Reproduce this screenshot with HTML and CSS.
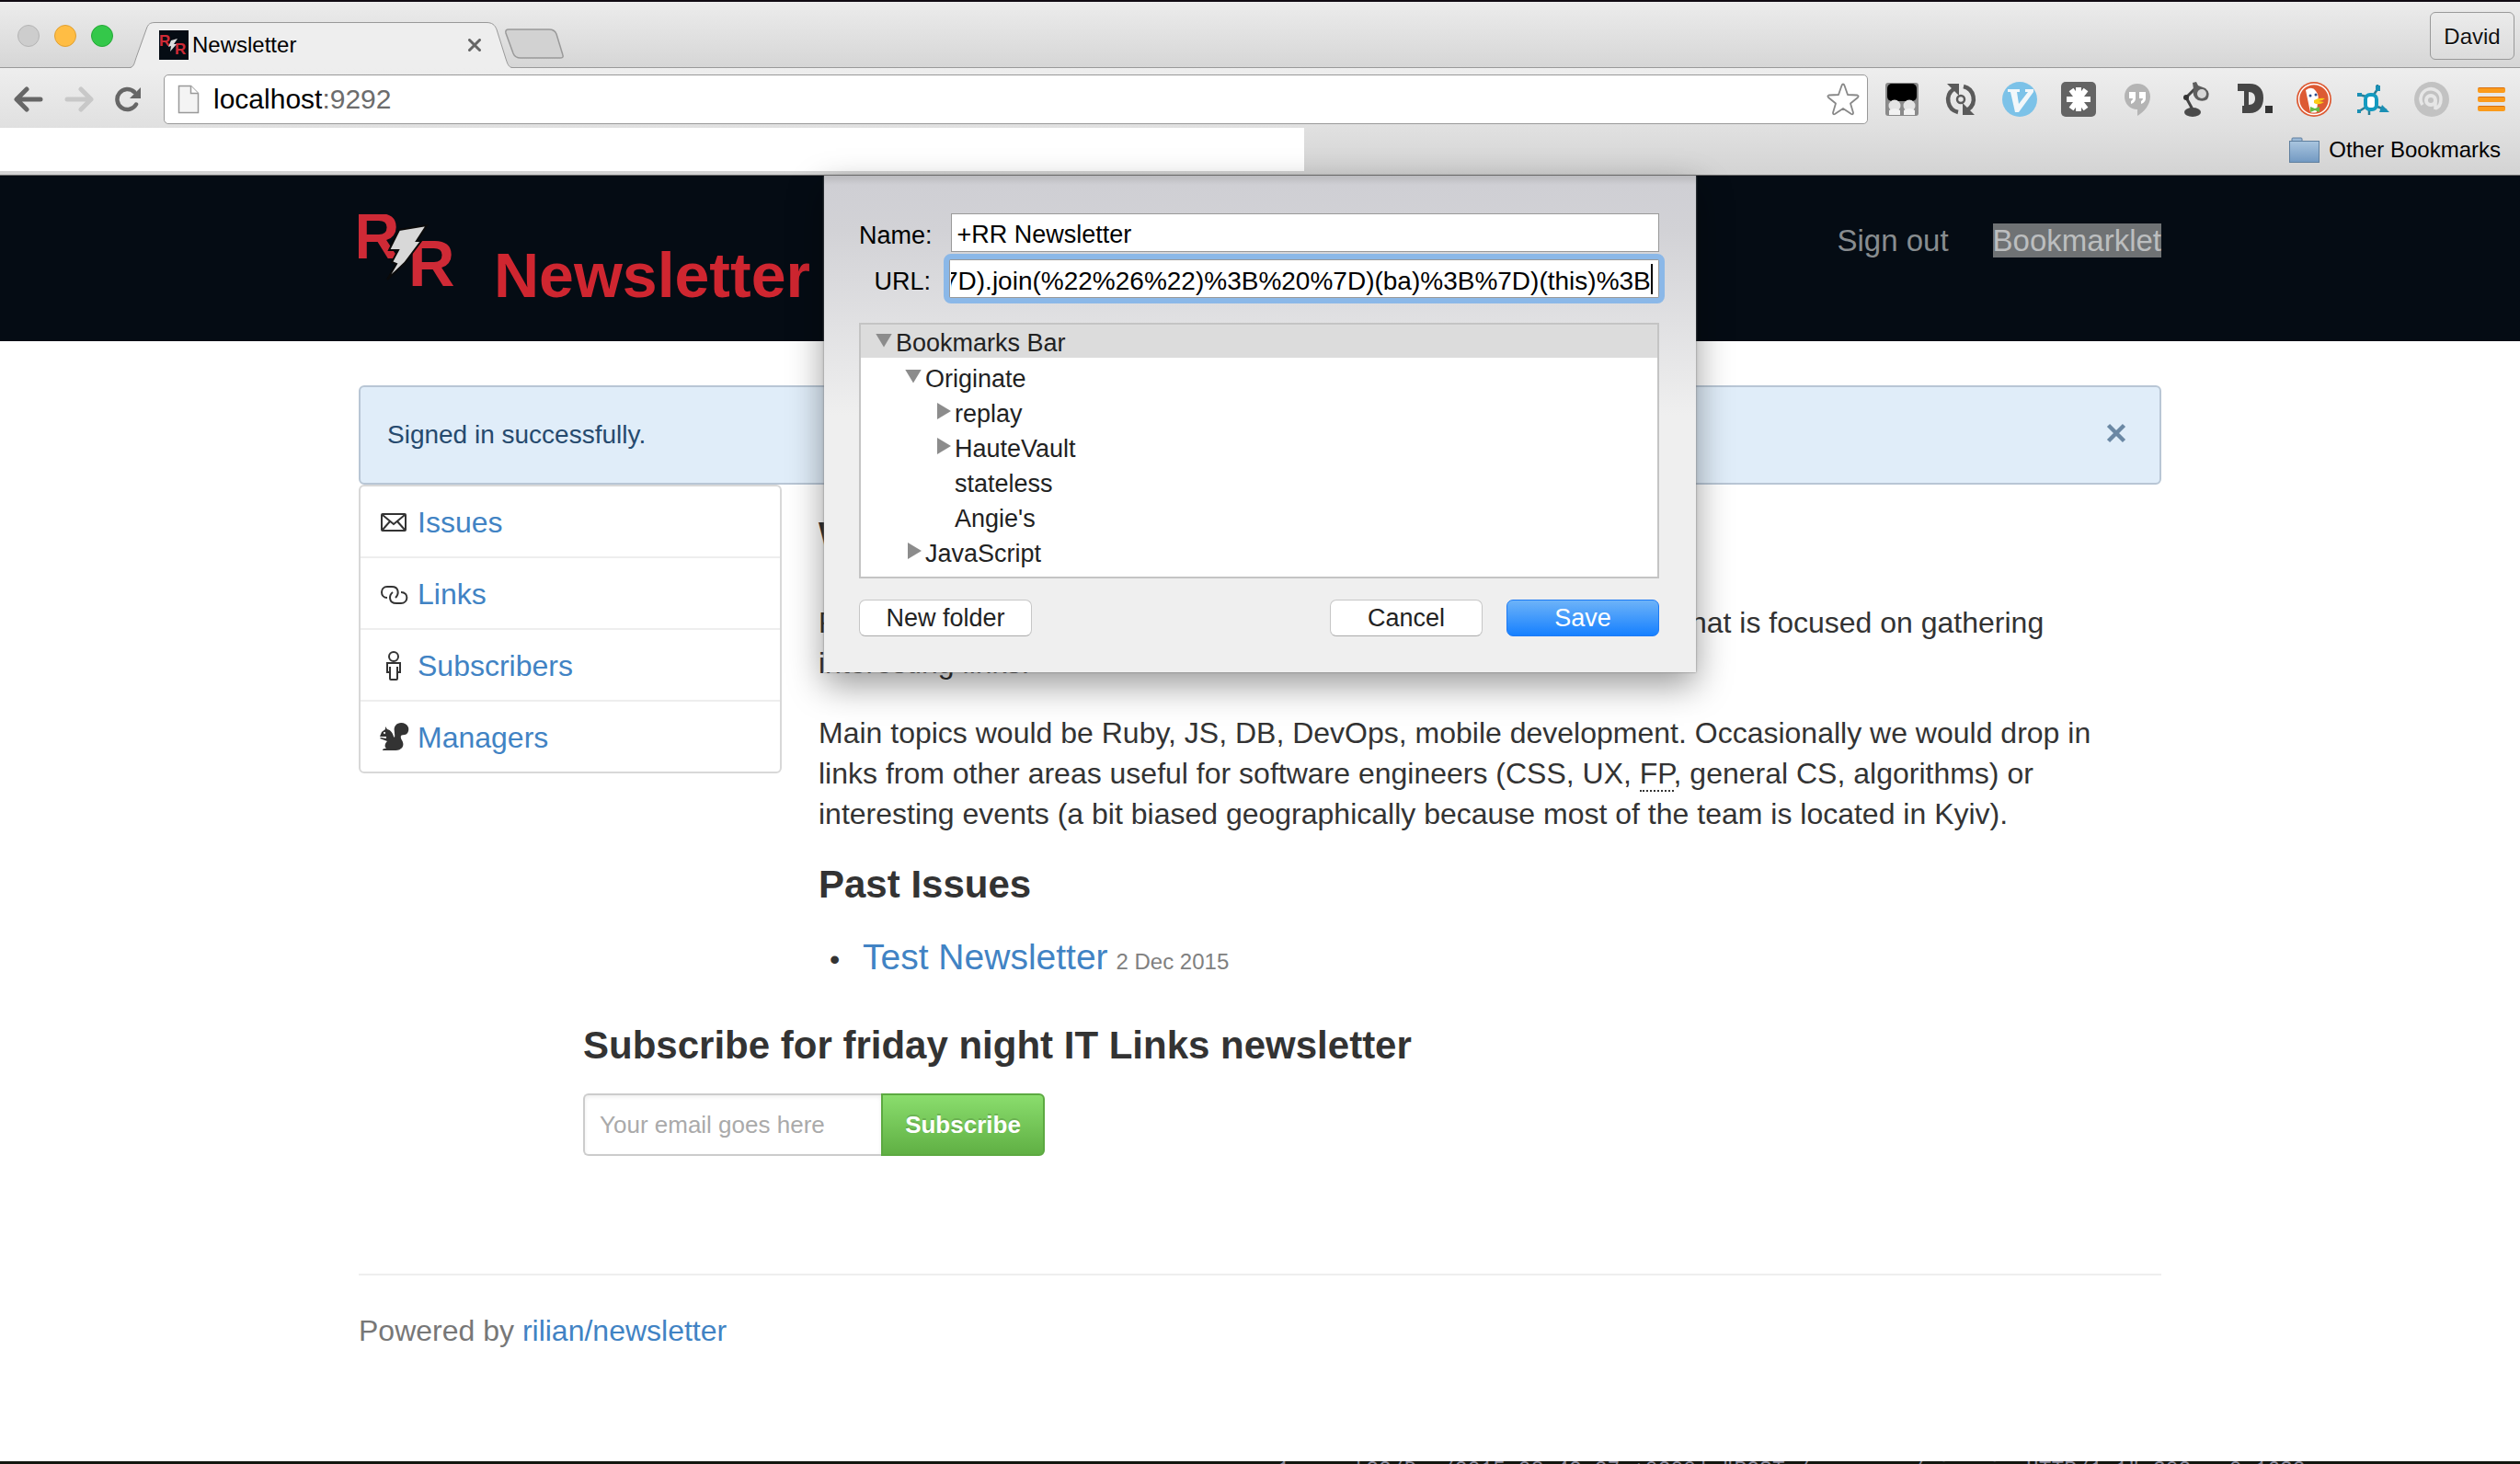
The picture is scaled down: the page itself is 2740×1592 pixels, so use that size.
FILE: index.html
```html
<!DOCTYPE html>
<html lang="en">
<head>
<meta charset="utf-8">
<title>Newsletter</title>
<link rel="stylesheet" href="styles.css">
</head>
<body>
<div class="titlebar">
  <div class="lights"><span class="light"></span><span class="light light-min"></span><span class="light light-max"></span></div>
  <div class="tab">
    <svg class="tab-shape" viewBox="0 0 416 50" preserveAspectRatio="none" aria-hidden="true"><path d="M0 50C5 49 5 44 8 36L18 8C20 2 22 1 28 1H388C394 1 397 3 399 8L409 40C411 46 412 49 416 50Z" fill="#eeeeee"/><path d="M0 49.500C5 49 5 44 8 36L18 8C20 2 22 .5 28 .5H388C394 .5 397 3 399 8L409 40C411 46 412 49 416 49.500" fill="none" stroke="#999"/></svg>
    <svg class="favicon" viewBox="0 0 32 32" aria-hidden="true"><rect width="32" height="32" fill="#050c14"/><text class="rr" x="0" y="17" font-size="17">R</text><text class="rr" x="17" y="26" font-size="17">R</text><path d="M13 11l7-2-4 6h3l-7 8 1-6-3 1z" fill="#ddd"/></svg>
    <span class="tab-title">Newsletter</span>
    <button class="tab-close" aria-label="Close tab"><svg width="14" height="14" viewBox="0 0 14 14"><path d="M1.500 1.500l11 11M12.500 1.500l-11 11" stroke="#666" stroke-width="3" stroke-linecap="round"/></svg></button>
  </div>
  <button class="new-tab" aria-label="New tab"><svg width="66" height="34" viewBox="0 0 66 34"><path d="M5 1H49Q55 1 57 6L64 29Q65 32 61 32H18Q12 32 10 27L2 5Q1 1 5 1Z" fill="#d2d2d2" stroke="#999" stroke-width="1.500"/></svg></button>
  <button class="profile">David</button>
</div>
<div class="toolbar">
  <button class="tool" aria-label="Back"><svg width="32" height="28" viewBox="0 0 32 28"><path d="M14 3L3 14l11 11M4 14h25" fill="none" stroke="#666" stroke-width="5" stroke-linecap="round" stroke-linejoin="round"/></svg></button>
  <button class="tool" aria-label="Forward"><svg width="32" height="28" viewBox="0 0 32 28"><path d="M18 3l11 11-11 11M28 14H3" fill="none" stroke="#c8c8c8" stroke-width="5" stroke-linecap="round" stroke-linejoin="round"/></svg></button>
  <button class="tool" aria-label="Reload"><svg width="30" height="28" viewBox="0 0 30 28"><path d="M23 19.500A11 11 0 1 1 21 6" fill="none" stroke="#666" stroke-width="4.500" stroke-linecap="round"/><path d="M28 1v12H16z" fill="#666"/></svg></button>
  <div class="omnibox">
    <svg width="24" height="32" viewBox="0 0 24 32" aria-hidden="true"><path d="M1.500 1.500h13l8 8v21h-21z" fill="#f4f4f4" stroke="#999" stroke-width="1.500"/><path d="M14.500 1.500v8h8" fill="#fff" stroke="#999" stroke-width="1.500"/></svg>
    <span class="address">localhost<span class="port">:9292</span></span>
    <svg class="star" width="36" height="36" viewBox="0 0 36 36" aria-hidden="true"><path d="M18 1.500Q19 1.500 19.500 3L23 13l10.500.5q2 .8.5 2.500L26 22.500l3 10q0 2.500-2 1.500l-9-6-9 6q-2 1-2-1.500l3-10L2 16q-1.500-1.700.5-2.500L13 13l3.500-10q.5-1.500 1.500-1.500z" fill="#fff" stroke="#888" stroke-width="1.800" stroke-linejoin="round"/></svg>
  </div>
  <div class="extensions" aria-hidden="true">
    <svg width="38" height="38" viewBox="0 0 38 38"><rect x="1" y="1" width="36" height="36" rx="3" fill="#8a8a8a"/><rect x="3" y="2" width="32" height="19" rx="5" fill="#000"/><circle cx="11" cy="26" r="6.500" fill="#e4e4e4"/><circle cx="27" cy="26" r="6.500" fill="#e4e4e4"/><path d="M5 31q6-4 12 0v5H5zM21 31q6-4 12 0v5H21z" fill="#f2f2f2"/></svg>
    <svg width="38" height="38" viewBox="0 0 38 38"><path d="M11 8A14 14 0 0 0 16 33M27 30A14 14 0 0 0 22 5" fill="none" stroke="#5a5a5a" stroke-width="4.500"/><path d="M4 2h13v13zM34 36H21V23z" fill="#5a5a5a"/><circle cx="19" cy="19" r="4" fill="none" stroke="#5a5a5a" stroke-width="2.500"/></svg>
    <svg width="38" height="38" viewBox="0 0 38 38"><circle cx="19" cy="19" r="19" fill="#7cc2e8"/><path d="M6 8h13v3h-3l2 13 10-13h-3V8h9v3L18 33h-4L9 11H6z" fill="#f2f7fa"/></svg>
    <svg width="38" height="38" viewBox="0 0 38 38"><rect width="38" height="38" rx="5" fill="#646464"/><path d="M19 6v26M6 19h26M11 8.500l16 21M27 8.500L11 29.500" stroke="#fff" stroke-width="6"/></svg>
    <svg width="38" height="38" viewBox="0 0 38 38"><path d="M19 2c8 0 14 6 14 14 0 9-7 17-14 21v-7C11 30 5 24 5 16S11 2 19 2z" fill="#b4b4b4"/><path d="M10 11h7v7q0 4-5 6v-3q2-1 2-3h-4zM21 11h7v7q0 4-5 6v-3q2-1 2-3h-4z" fill="#fff"/></svg>
    <svg width="38" height="38" viewBox="0 0 38 38"><path d="M15 30L8 17 17 8" fill="none" stroke="#444" stroke-width="3"/><ellipse cx="15" cy="33" rx="9" ry="5" fill="#4a4a4a"/><path d="M15 1l4-1 2 4 8 3q6 5 2 12-4 3-10 1-7-4-5-12z" fill="#5e5e5e"/><ellipse cx="25" cy="13" rx="5" ry="5" fill="#d8d8d8"/><circle cx="8" cy="17" r="3" fill="#333"/></svg>
    <svg width="38" height="38" viewBox="0 0 38 38"><path fill-rule="evenodd" d="M0 2h13c10 0 15 6 15 15.500S23 34 13 34H5v-8H7V10H0zM12 11v14c5 0 7-3 7-7s-2-7-7-7z" fill="#464646"/><rect x="30" y="26" width="8" height="8" fill="#333"/></svg>
    <svg width="38" height="38" viewBox="0 0 38 38"><circle cx="19" cy="19" r="19" fill="#dd5a33"/><circle cx="19" cy="19" r="16.500" fill="none" stroke="#fff" stroke-width="1.500"/><path d="M10 9q7-5 11 1 4 5 2 12l-1 11q-4 1-7 0z" fill="#fff"/><path d="M19 20q5-3 12-2-3 3-7 3l6 1q-6 4-11 1z" fill="#fbcc18"/><circle cx="15" cy="15" r="1.500" fill="#2d4f8e"/><circle cx="21" cy="14" r="1.500" fill="#2d4f8e"/><path d="M15 27l5 2 5-2v6l-5-2-5 2z" fill="#66bb46"/></svg>
    <svg width="38" height="38" viewBox="0 0 38 38"><path d="M12 16L4 14M12 27l-8 5M15 29v7M20 14l4-6V3M24 27l10 4" stroke="#2b7d94" stroke-width="2.500" fill="none"/><rect x="11" y="14" width="12" height="16" rx="5" fill="#fff" stroke="#149ac0" stroke-width="4"/><path d="M22 4h5v6h-5zM2 12h5v4H2zM2 30h4v4H2zM29 25l8 8H26z" fill="#1a8fb4"/></svg>
    <svg width="38" height="38" viewBox="0 0 38 38"><circle cx="19" cy="19" r="19" fill="#c2c2c2"/><circle cx="18" cy="20" r="5" fill="none" stroke="#e6e6e6" stroke-width="4"/><path d="M23 30V20M9 25a11 11 0 1 1 20-6q0 8-6 10" fill="none" stroke="#e6e6e6" stroke-width="3.500"/></svg>
  </div>
  <button class="menu" aria-label="Menu"><span></span><span></span><span></span></button>
</div>
<div class="bookmarks">
  <div class="bookmarks-blank"></div>
  <a class="folder" href="#"><svg width="33" height="28" viewBox="0 0 33 28" aria-hidden="true"><defs><linearGradient id="fold" x2="0" y2="1"><stop stop-color="#a9c5df"/><stop offset="1" stop-color="#7299c2"/></linearGradient></defs><path d="M3 5V2q0-1 1-1h9q1 0 1 1v3" fill="#9bb9d6" stroke="#5f7f9f"/><rect x=".5" y="4.500" width="32" height="23" fill="url(#fold)" stroke="#5f7f9f"/></svg>Other Bookmarks</a>
</div>

<div class="viewport">
  <header class="site-header">
    <div class="container header-row">
      <a class="logo" href="#" aria-label="RR"><svg width="107" height="82" viewBox="0 0 107 82"><text class="rr" x="-6" y="48" font-size="70">R</text><text class="rr" x="54" y="78" font-size="70">R</text><path d="M44 17L74 12 63 29H68L50 53 31 71 41 54 36 52 43 39H33Z" fill="#d8d8d8" stroke="#0a0a0a" stroke-width="2"/></svg></a>
      <a class="brand" href="#">Newsletter</a>
      <nav class="account"><a href="#">Sign out</a><a href="#"><span class="selected">Bookmarklet</span></a></nav>
    </div>
  </header>
  <main class="container">
    <div class="alert"><span>Signed in successfully.</span><button class="alert-close" aria-label="Dismiss"><svg width="22" height="22" viewBox="0 0 22 22"><path d="M2.500 2.500l17 17M19.500 2.500l-17 17" stroke="#6b88a4" stroke-width="4.500"/></svg></button></div>
    <div class="columns">
      <nav class="side">
        <ul>
          <li><svg width="32" height="34" viewBox="0 0 32 34" aria-hidden="true"><g fill="none" stroke="#333" stroke-width="2"><rect x="2" y="8" width="26" height="18" rx="1"/><path d="M3 9l12 10L27 9M3 25l8-9M27 25l-8-9"/></g></svg><a href="#">Issues</a></li>
          <li><svg width="32" height="34" viewBox="0 0 32 34" aria-hidden="true"><path d="M8 21C0 21 0 9 8 9h5c8 0 8 8 4 12M23 15c9 0 8 12 0 12h-5c-9 0-8-9-4-12" fill="none" stroke="#333" stroke-width="2"/></svg><a href="#">Links</a></li>
          <li><svg width="32" height="34" viewBox="0 0 32 34" aria-hidden="true"><g fill="none" stroke="#333" stroke-width="2"><circle cx="15" cy="7" r="5"/><path d="M8 14h14v10h-3v7q0 1-1 1h-6q-1 0-1-1v-7H8zM11 18v6M19 18v6"/></g></svg><a href="#">Subscribers</a></li>
          <li><svg width="32" height="34" viewBox="0 0 32 34" aria-hidden="true"><path fill-rule="evenodd" d="M0 16l2-5 4-3V5l2 3c4 1 6 4 7 8l1 1C17 12 14 8 17 4c4-5 12-3 14 2 1 4-1 8-4 8-5 0-5 2-3 6 2 3 2 7-1 9-2 2-5 2-8 2H3c0-2 2-2 4-2-2-2-2-5 1-8l-8-3 1-1 6 1v-2zM5 11a1 1 0 1 0 .1 0z" fill="#333"/></svg><a href="#">Managers</a></li>
        </ul>
      </nav>
      <section class="article">
        <h2>What is RR Newsletter?</h2>
        <p>RR Newsletter is a weekly journal for curious software developers that is focused on gathering interesting links.</p>
        <p>Main topics would be Ruby, JS, DB, DevOps, mobile development. Occasionally we would drop in links from other areas useful for software engineers (CSS, UX, <abbr title="Functional programming">FP</abbr>, general CS, algorithms) or interesting events (a bit biased geographically because most of the team is located in Kyiv).</p>
        <h2 class="past">Past Issues</h2>
        <ul class="issues"><li><a href="#">Test Newsletter</a> <small>2 Dec 2015</small></li></ul>
      </section>
    </div>
    <form class="subscribe">
      <h2><label for="email">Subscribe for friday night IT Links newsletter</label></h2>
      <div class="subscribe-row"><input id="email" type="email" placeholder="Your email goes here"><button type="button">Subscribe</button></div>
    </form>
    <footer>Powered by <a href="#">rilian/newsletter</a></footer>
  </main>

  <form class="sheet" aria-label="Edit bookmark">
    <div class="field"><label for="name">Name:</label><input id="name" type="text" value="+RR Newsletter"></div>
    <div class="field"><label for="url">URL:</label><div class="url-box"><input id="url" type="text" value="7D).join(%22%26%22)%3B%20%7D)(ba)%3B%7D)(this)%3B"><span class="caret"></span></div></div>
    <ul class="tree">
      <li class="current"><span class="down"></span>Bookmarks Bar</li>
      <li class="level-1"><span class="down"></span>Originate</li>
      <li class="level-2"><span class="right"></span>replay</li>
      <li class="level-2"><span class="right"></span>HauteVault</li>
      <li class="level-2"><span class="none"></span>stateless</li>
      <li class="level-2"><span class="none"></span>Angie's</li>
      <li class="level-1"><span class="right"></span>JavaScript</li>
    </ul>
    <div class="actions"><button type="button" class="new-folder">New folder</button><button type="button">Cancel</button><button type="button" class="save">Save</button></div>
  </form>
</div>
<div class="terminal" aria-hidden="true">::1 - - [22/Dec/2015:08:42:27 +0200] "POST /managers/sign_in HTTP/1.1" 302 - 0.1632</div>
<script src="sheet.js"></script>
</body>
</html>
```
FILE: sheet.js
```js
// Keep the end of a long bookmark address in view.
const url = document.getElementById('url');
url.scrollLeft = url.scrollWidth;
```
FILE: styles.css
```css
* { box-sizing: border-box; }
body {
  margin: 0;
  min-height: 100vh;
  display: flex;
  flex-direction: column;
  background: #fff;
  color: #333;
  font: 32px/44px "Liberation Sans", Arial, sans-serif;
}
a { color: #4183c4; text-decoration: none; }
button, input { font-family: inherit; margin: 0; }
button { padding: 0; border: 0; background: none; }
ul { list-style: none; margin: 0; padding: 0; }
h2 { margin: 0; font-size: 42px; line-height: 46px; }
svg { display: block; flex: none; }
.rr { font-family: "Liberation Sans", Arial, sans-serif; font-weight: bold; fill: #cf2a36; }
.container { width: 100%; max-width: 1960px; margin: 0 auto; }

/* Browser window */
.titlebar {
  height: 74px;
  display: flex;
  align-items: flex-end;
  padding: 0 6px 0 19px;
  background: linear-gradient(#ececec, #d6d6d6);
  border-top: 2px solid #100a12;
  border-bottom: 1px solid #999;
}
.lights { display: flex; gap: 16px; padding-bottom: 22px; margin-right: 18px; }
.light { width: 24px; height: 24px; border-radius: 50%; background: #cdcdcd; border: 1px solid #b4b4b4; }
.light-min { background: #ffbd44; border-color: #e0a032; }
.light-max { background: #34c84a; border-color: #24a836; }
.tab {
  position: relative;
  width: 416px;
  height: 50px;
  margin-bottom: -1px;
  padding: 0 34px 0 32px;
  display: flex;
  align-items: center;
  gap: 4px;
}
.tab-shape { position: absolute; inset: 0; width: 100%; height: 100%; }
.favicon { width: 32px; height: 32px; position: relative; }
.tab-title { position: relative; flex: 1; font-size: 24px; line-height: 32px; color: #000; }
.tab-close { position: relative; }
.new-tab { margin: 0 auto 8px -9px; }
.profile {
  width: 92px;
  height: 52px;
  margin-bottom: 8px;
  padding-top: 2px;
  border: 1px solid #999;
  border-radius: 6px;
  background: linear-gradient(#ebebeb, #dcdcdc);
  color: #111;
  font-size: 24px;
  text-shadow: 0 1px #fff;
}
.toolbar {
  height: 65px;
  display: flex;
  align-items: center;
  padding: 3px 16px 0 15px;
  background: linear-gradient(#eeeeee, #e0e0e0);
}
.tool { margin-right: 23px; }
.omnibox {
  flex: 1;
  height: 54px;
  display: flex;
  align-items: center;
  padding: 0 8px 0 14px;
  border: 1px solid #999;
  border-radius: 5px;
  background: #fff;
}
.address { flex: 1; margin-left: 15px; font-size: 30px; line-height: 40px; color: #000; }
.port { color: #6c6c6c; }
.extensions { display: flex; gap: 26px; margin: 0 31px 0 18px; }
.menu { display: flex; flex-direction: column; gap: 4px; }
.menu span { width: 30px; height: 6px; border-radius: 2px; background: #fb9b1c; border-top: 1px solid #d9700e; }
.bookmarks {
  height: 52px;
  display: flex;
  justify-content: space-between;
  padding-bottom: 4px;
  background: linear-gradient(#e0e0e0, #d3d3d3);
  border-bottom: 1px solid #6c6c6c;
}
.bookmarks-blank { width: 1418px; background: #fff; }
.folder { display: flex; align-items: center; gap: 10px; padding-right: 21px; font-size: 24px; line-height: 28px; color: #000; }

/* Site */
.viewport { position: relative; flex: 1; }
.site-header { height: 180px; padding-top: 42px; background: #050c14; }
.header-row { display: flex; align-items: flex-start; }
.brand { margin-left: 40px; padding-top: 28px; color: #cf2630; font-size: 68px; line-height: 76px; font-weight: bold; }
.account { margin-left: auto; padding-top: 7px; display: flex; gap: 48px; font-size: 33px; }
.account a { color: #888c8f; }
.selected { background: #6f7274; color: #bcbebf; }
main { padding-top: 48px; }
.alert {
  height: 108px;
  display: flex;
  justify-content: space-between;
  align-items: center;
  padding: 0 36px 0 29px;
  border: 2px solid #b8c6d5;
  border-radius: 6px;
  background: #e0edf9;
  color: #264a6e;
  font-size: 28px;
}
.alert-close { padding-bottom: 4px; }
.columns { display: flex; align-items: flex-start; gap: 40px; }
.side { width: 460px; border: 2px solid #d8d8d8; border-radius: 6px; }
.side li { height: 78px; display: flex; align-items: center; gap: 9px; padding: 2px 0 0 21px; border-bottom: 2px solid #eee; }
.side li:last-child { height: 76px; border-bottom: 0; }
.article { flex: 1; padding: 33px 24px 0 0; }
.article h2 { margin-bottom: 49px; }
.article p { margin: 0 0 32px; }
.article abbr { text-decoration: none; border-bottom: 2px dotted #333; }
.article .past { margin-bottom: 34px; }
.issues { padding-left: 12px; }
.issues li::before { content: "•"; display: inline-block; width: 36px; }
.issues a { font-size: 39px; }
.issues small { color: #808080; font-size: 24px; }
.subscribe { margin: 46px 0 128px 244px; }
.subscribe h2 { margin-bottom: 29px; }
.subscribe-row { display: flex; height: 68px; font-size: 26px; }
.subscribe input {
  width: 324px;
  padding: 0 16px;
  border: 2px solid #ccc;
  border-right: 0;
  border-radius: 6px 0 0 6px;
  font-size: 26px;
  box-shadow: inset 0 2px 4px #eee;
}
.subscribe input::placeholder { color: #aaa; }
.subscribe button {
  width: 178px;
  border: 2px solid #5ca941;
  border-radius: 0 6px 6px 0;
  background: linear-gradient(#8add6d, #60b044);
  color: #fff;
  font-size: 26px;
  font-weight: bold;
  text-shadow: 0 -2px rgba(0, 0, 0, .15);
}
footer { padding-top: 38px; border-top: 2px solid #eee; color: #777; }

/* Bookmark sheet, hanging from the window's toolbar */
.sheet {
  position: absolute;
  top: 0;
  left: 0;
  right: 0;
  width: 948px;
  margin: 0 auto;
  padding: 41px 40px 39px 38px;
  background: linear-gradient(#b9b9bd, #cfcfd4 10px, #d2d2d6 60px, #efefef 260px);
  box-shadow: 0 0 2px #777, 0 14px 36px rgba(0, 0, 0, .4);
  font-size: 27px;
  color: #222;
}
.field { display: flex; align-items: center; justify-content: flex-end; gap: 20px; margin-bottom: 8px; color: #000; }
.field label { padding-top: 6px; line-height: 36px; }
.field input {
  display: block;
  width: 772px;
  height: 42px;
  padding: 5px 6px 0;
  border: 1px solid #999;
  background: #fff;
  color: #000;
  font-size: 27px;
}
.url-box { position: relative; outline: 6px solid #8bb8e8; border-radius: 2px; }
.field .url-box input { padding: 5px 8px 0 1px; font-size: 28px; outline: 0; }
.caret { position: absolute; right: 7px; top: 5px; width: 2px; height: 33px; background: #000; }
.tree { height: 278px; margin-top: 27px; border: 2px solid #c4c4c4; background: #fff; }
.tree li { display: flex; align-items: center; gap: 4px; height: 38px; padding: 4px 0 0 16px; }
.tree .current { height: 36px; margin-bottom: 2px; background: #dcdcdc; }
.tree .level-1 { padding-left: 48px; }
.tree .level-2 { padding-left: 80px; }
.down, .right, .none { width: 18px; margin-top: -6px; }
.down { height: 15px; background: #8c8c8c; clip-path: polygon(0 0, 100% 0, 50% 100%); }
.right { height: 18px; background: #8c8c8c; clip-path: polygon(3px 0, 100% 50%, 3px 100%); }
.actions { display: flex; gap: 26px; margin-top: 23px; }
.actions button {
  width: 166px;
  height: 40px;
  border: 1px solid #c6c6c6;
  border-bottom-color: #aaa;
  border-radius: 7px;
  background: #fff;
  color: #222;
  font-size: 27px;
}
.actions .new-folder { width: 188px; margin-right: auto; }
.actions .save { border-color: #1c7af5; background: linear-gradient(#6db3f8, #1680ff); color: #fff; }

/* Edge of the terminal window below */
.terminal {
  height: 3px;
  padding-left: 1361px;
  overflow: hidden;
  background: #12160f;
  color: #889;
  font: 23px/20px "Liberation Mono", monospace;
  white-space: nowrap;
}
```
